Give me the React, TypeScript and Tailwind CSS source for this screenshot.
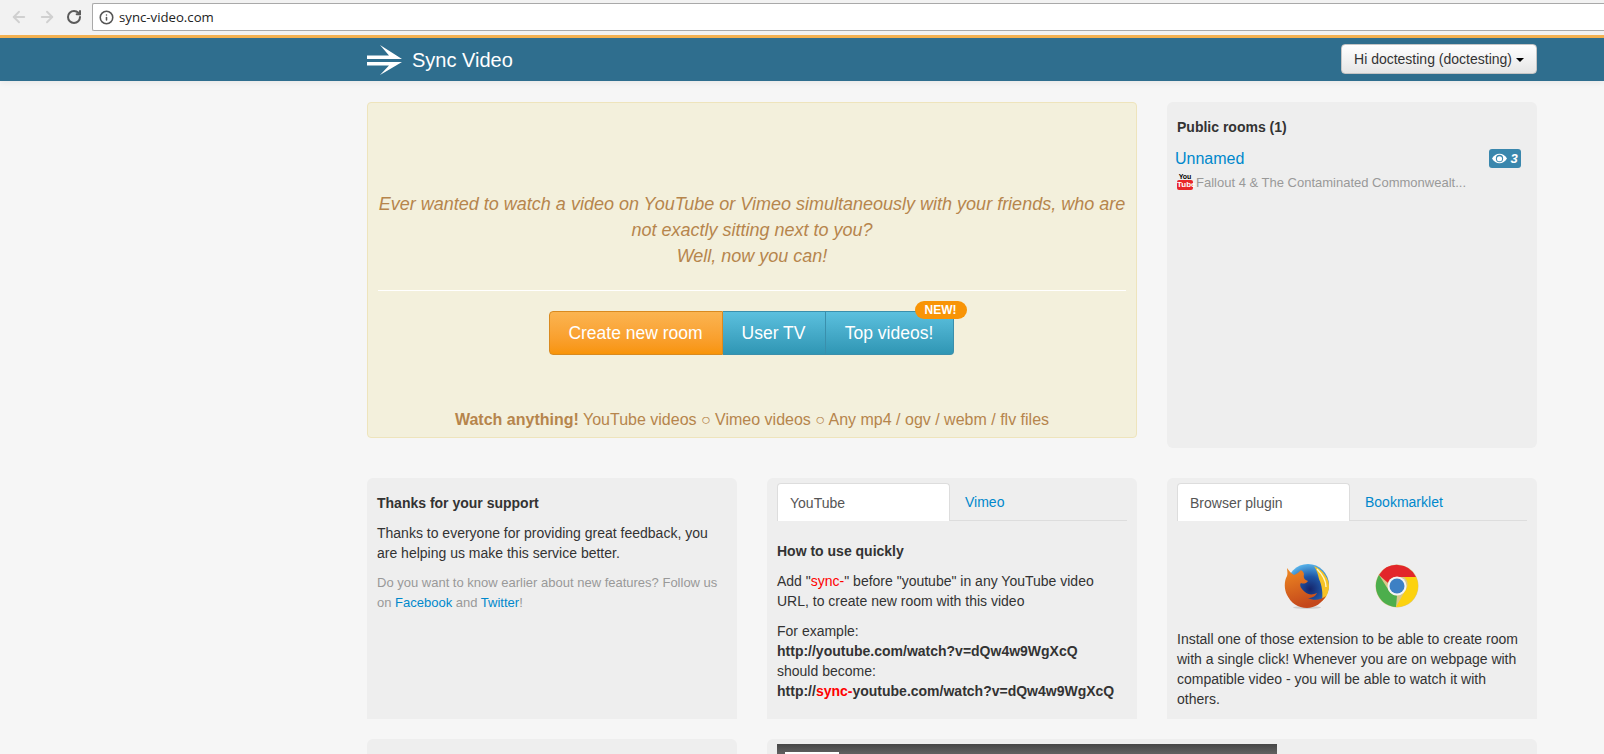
import { ArrowLeft, ArrowRight, Info, RotateCw } from "lucide-react";

// LOGO ARROW
function Logo() {
  return (
    <svg width="35" height="30" viewBox="0 0 35 30" className="flex-none">
      <path d="M13 0 L35 14 H0 V10.5 H22 Z" fill="#fff" />
      <path d="M0 17 H35 L13 30 L22 20.5 H0 Z" fill="#fff" />
    </svg>
  );
}

function YoutubeIcon() {
  return (
    <span className="flex w-[16px] flex-none flex-col items-center font-bold">
      <span className="text-[7px] leading-[7px] text-black">You</span>
      <span className="h-[10px] w-full rounded-[2px] bg-[#e8262a] text-center text-[8px] leading-[10px] text-white">Tube</span>
    </span>
  );
}

function EyeIcon() {
  return (
    <svg width="15" height="11" viewBox="0 0 14 10">
      <path d="M0 5 C3 -1 11 -1 14 5 C11 11 3 11 0 5 Z" fill="#fff" />
      <circle cx="7" cy="5" r="3.4" fill="#3a87ad" />
      <circle cx="7" cy="5.2" r="2.4" fill="#fff" />
    </svg>
  );
}

function FirefoxIcon() {
  return (
    <svg width="46" height="46" viewBox="0 0 46 46">
      <defs>
        <radialGradient id="ffBlue" cx="0.55" cy="0.6" r="0.6">
          <stop offset="0" stopColor="#15246a" />
          <stop offset="0.5" stopColor="#1f55a4" />
          <stop offset="1" stopColor="#55b0e8" />
        </radialGradient>
        <linearGradient id="ffFox" x1="0" y1="0" x2="0.3" y2="1">
          <stop offset="0" stopColor="#ef8a22" />
          <stop offset="1" stopColor="#c4471b" />
        </linearGradient>
      </defs>
      <ellipse cx="23" cy="44.5" rx="14" ry="1.4" fill="#cfcfcf" />
      <circle cx="24" cy="22" r="21" fill="url(#ffBlue)" />
      <path d="M30 3 C39 7 46 16 45 25 C44 31 42 35 38 38 C39 31 38 22 35 16 C34 12 33 7 30 3 Z" fill="#f7c325" />
      <path d="M33 6 C38 11 42 17 42 24" fill="none" stroke="#fff6c4" strokeWidth="1.4" />
      <path d="M3 5 C3 8 4 10 3 13 C0 18 0 26 3 32 C7 40 14 45 23 45 C31 45 38 40 42 33 C37 37 30 38 24 35 C28 35 32 33 33 30 C29 32 24 32 21 29 C17 26 15 22 17 20 C19 21 22 21 24 18 C21 17 19 15 20 11 C19 8 18 8 17 7 C15 9 13 11 10 12 C7 10 5 8 3 5 Z" fill="url(#ffFox)" />
    </svg>
  );
}

function ChromeIcon() {
  return (
    <svg width="44" height="44" viewBox="0 0 44 44">
      <circle cx="22" cy="22" r="21.5" fill="#d8c88a" />
      <path d="M4 11 A21 21 0 0 1 41 13 L22 13 A9 9 0 0 0 13 19 Z" fill="#e2262a" />
      <path d="M4 11 L13.5 26 A9.5 9.5 0 0 0 22 31.5 L21 43 A21 21 0 0 1 4 11 Z" fill="#4cae4c" />
      <path d="M41 13 A21 21 0 0 1 21 43 L30 27 A9.5 9.5 0 0 0 29 13 Z" fill="#fcd20f" />
      <circle cx="22" cy="22" r="9.5" fill="#f4f4f4" />
      <circle cx="22" cy="22" r="7.5" fill="#3d80c4" />
    </svg>
  );
}

function Tabs({ active, other }: { active: string; other: string }) {
  return (
    <div className="flex h-[38px] border-b border-[#ddd]">
      <div className="-mb-px flex h-[38px] w-[173px] items-center rounded-t border border-b-0 border-[#ddd] bg-white pl-3 text-[#555]">
        {active}
      </div>
      <div className="flex items-center pl-[15px] text-[#0088cc]">{other}</div>
    </div>
  );
}

export default function App() {
  return (
    <div className="h-[754px] overflow-hidden bg-[#f6f6f6] font-['Liberation_Sans',sans-serif] text-[14px] leading-[20px] text-[#333]">
      {/* BROWSER BAR */}
      <div className="flex h-[35px] items-start bg-[#f2f2f2] pt-[3px] pl-[10px]">
        <ArrowLeft size={18} strokeWidth={2.5} className="mt-[5px] text-[#d0d0d0]" />
        <ArrowRight size={18} strokeWidth={2.5} className="mt-[5px] ml-[10px] text-[#d0d0d0]" />
        <RotateCw size={16} strokeWidth={3} className="mt-[6px] ml-[10px] text-[#5a5a5a]" />
        <div className="ml-[10px] flex h-[28px] flex-1 items-center rounded-l-[2px] border border-r-0 border-[#a9a9a9] bg-white pl-[6px] font-['Open_Sans',sans-serif] text-[13.2px] text-[#222]">
          <Info size={15} strokeWidth={2.5} className="mr-[5px] text-[#555]" />
          sync-video.com
        </div>
      </div>

      {/* NAV */}
      <div className="h-[3px] bg-[#f4b252]" />
      <div className="h-[43px] bg-[#2f6e8e] shadow-[0_2px_6px_rgba(0,0,0,0.06)]">
        <div className="ml-[367px] flex h-full w-[1170px] items-center justify-between">
          <div className="flex items-center gap-[10px]">
            <Logo />
            <span className="text-[20px] text-white">Sync Video</span>
          </div>
          <button className="mb-[2px] flex h-[30px] w-[196px] items-center justify-center gap-[4px] rounded border border-[#c5c5c5] bg-gradient-to-b from-white to-[#e6e6e6] text-[14px] text-[#333]">
            Hi doctesting (doctesting)
            <span className="mt-[2px] border-x-[4px] border-t-[4px] border-x-transparent border-t-black" />
          </button>
        </div>
      </div>

      <div className="mt-[21px] ml-[367px] w-[1170px]">
        {/* TOP ROW */}
        <div className="flex items-start gap-[30px]">
          <div className="flex h-[336px] w-[770px] flex-col items-center rounded-[4px] border border-[#eee4bc] bg-[#f3f0dc] px-[10px] text-[#b6854c]">
            <div className="mt-[88px] text-center text-[18px] leading-[26px] italic">
              Ever wanted to watch a video on YouTube or Vimeo simultaneously with your friends, who are not exactly sitting next to you?
              <br />
              Well, now you can!
            </div>
            <div className="mt-[21px] h-px w-full bg-white" />
            <div className="relative mt-[20px] mr-[2px] flex h-[44px] text-[17.5px] text-white">
              <div className="flex w-[174px] items-center justify-center rounded-l-[4px] border border-[#d98a1f] bg-gradient-to-b from-[#fbb450] to-[#f89406]">Create new room</div>
              <div className="flex w-[103px] items-center justify-center border-y border-r border-[#3a8fac] bg-gradient-to-b from-[#5bc0de] to-[#2f96b4]">User TV</div>
              <div className="flex w-[128px] items-center justify-center rounded-r-[4px] border-y border-r border-[#3a8fac] bg-gradient-to-b from-[#5bc0de] to-[#2f96b4]">Top videos!</div>
              <span className="absolute top-[-10px] right-[-13px] rounded-[9px] bg-[#f89406] px-[10px] text-[12px] leading-[18px] font-bold">NEW!</span>
            </div>
            <div className="mt-auto mb-[7px] text-[16px]">
              <b>Watch anything!</b> YouTube videos ○ Vimeo videos ○ Any mp4 / ogv / webm / flv files
            </div>
          </div>

          <div className="h-[346px] w-[370px] rounded-[6px] bg-[#eee] px-[8px] pt-[15px]">
            <div className="ml-[2px] font-bold">Public rooms (1)</div>
            <div className="mt-[11px] flex items-start justify-between pr-[8px]">
              <span className="text-[16px] leading-[22px] text-[#0088cc]">Unnamed</span>
              <span className="mt-[1px] flex h-[19px] w-[32px] items-center justify-center gap-[3px] rounded-[3px] bg-[#3a87ad] text-[13px] font-bold text-white italic">
                <EyeIcon />3
              </span>
            </div>
            <div className="mt-[3px] ml-[2px] flex items-start gap-[3px] text-[13px] text-[#999]">
              <YoutubeIcon />
              Fallout 4 &amp; The Contaminated Commonwealt...
            </div>
          </div>
        </div>

        {/* MIDDLE ROW */}
        <div className="mt-[30px] flex gap-[30px]">
          <div className="h-[241px] w-[370px] rounded-t-[6px] bg-[#eee] px-[10px] pt-[15px]">
            <div className="font-bold">Thanks for your support</div>
            <p className="mt-[10px]">Thanks to everyone for providing great feedback, you are helping us make this service better.</p>
            <p className="mt-[10px] text-[13px] text-[#999]">
              Do you want to know earlier about new features? Follow us on <span className="text-[#0088cc]">Facebook</span> and <span className="text-[#0088cc]">Twitter</span>!
            </p>
          </div>

          <div className="h-[241px] w-[370px] rounded-t-[6px] bg-[#eee] px-[10px] pt-[5px]">
            <Tabs active="YouTube" other="Vimeo" />
            <div className="mt-[20px] font-bold">How to use quickly</div>
            <p className="mt-[10px]">
              Add "<span className="text-[#f00]">sync-</span>" before "youtube" in any YouTube video URL, to create new room with this video
            </p>
            <p className="mt-[10px]">
              For example:
              <br />
              <b>http://youtube.com/watch?v=dQw4w9WgXcQ</b>
              <br />
              should become:
              <br />
              <b>
                http://<span className="text-[#f00]">sync-</span>youtube.com/watch?v=dQw4w9WgXcQ
              </b>
            </p>
          </div>

          <div className="h-[241px] w-[370px] rounded-t-[6px] bg-[#eee] px-[10px] pt-[5px]">
            <Tabs active="Browser plugin" other="Bookmarklet" />
            <div className="mt-[42px] flex items-center justify-center gap-[45px] pr-[2px]">
              <FirefoxIcon />
              <ChromeIcon />
            </div>
            <p className="mt-[20px]">Install one of those extension to be able to create room with a single click! Whenever you are on webpage with compatible video - you will be able to watch it with others.</p>
          </div>
        </div>

        {/* BOTTOM ROW */}
        <div className="mt-[20px] flex gap-[30px]">
          <div className="h-[40px] w-[370px] rounded-t-[6px] bg-[#eee]" />
          <div className="h-[40px] flex-1 rounded-t-[6px] bg-[#eee] px-[10px] pt-[5px]">
            <div className="h-[35px] w-[500px] bg-gradient-to-b from-[#464646] to-[#5f5f5f] to-[26%] pt-[8px] pl-[8px]">
              <div className="h-[10px] w-[54px] bg-white" />
            </div>
          </div>
        </div>
      </div>
    </div>
  );
}
